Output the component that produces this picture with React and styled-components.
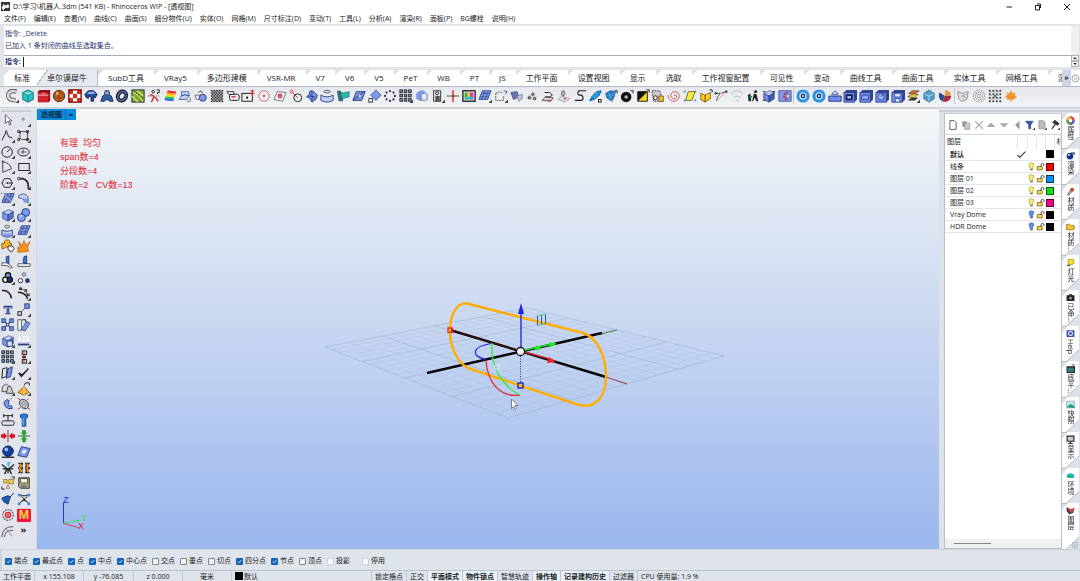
import React from "react";
import styled, { createGlobalStyle } from "styled-components";

const GlobalStyle = createGlobalStyle`
  * { box-sizing: border-box; }
  body {
    margin: 0;
    overflow: hidden;
    font-family: "Open Sans", "Noto Sans CJK SC", sans-serif;
    font-size: 7px;
    line-height: 12px;
    color: #1b1b1b;
  }
  button, input {
    font: inherit;
    color: inherit;
    margin: 0;
    padding: 0;
    border: none;
    background: none;
  }
`;

const Window = styled.div`
  display: flex;
  flex-direction: column;
  height: 100vh;
  background: #dfe3ea;
`;

const TitleBar = styled.header`
  display: flex;
  align-items: center;
  height: 13px;
  padding-left: 1px;
  gap: 3px;
  background: white;
`;

const Title = styled.h1`
  flex: 1;
  margin: 0;
  font-size: 7px;
  font-weight: 400;
`;

const WindowButton = styled.button`
  display: flex;
  align-items: center;
  justify-content: center;
  width: 26px;
  height: 12px;
`;

const MenuBar = styled.nav`
  display: flex;
  gap: 8px;
  height: 11px;
  padding-left: 4px;
  background: white;
`;

const MenuItem = styled.button`
  line-height: 11px;
  white-space: nowrap;
`;

const CommandArea = styled.section`
  display: flex;
  height: 46px;
  padding: 2px 1px 3px 4px;
  background: #e1e5ea;
`;

const CommandText = styled.div`
  flex: 1;
  display: flex;
  flex-direction: column;
  background: white;
  color: #26356f;
`;

const History = styled.div`
  flex: 1;
  padding: 2px 0 0 1px;
`;

const Prompt = styled.label`
  display: flex;
  align-items: center;
  gap: 2px;
  height: 12px;
  padding-left: 1px;
  border-top: 1px solid #a9adb3;
  font-weight: 700;
`;

const CommandInput = styled.input`
  flex: 1;
  height: 10px;
  border-left: 1px solid #222;
  outline: none;
`;

const CommandScroll = styled.div`
  display: flex;
  flex-direction: column;
  justify-content: flex-end;
  width: 8px;
  background: #f0f0f0;
`;

const SpinButton = styled.button`
  display: flex;
  height: 6px;
  align-items: center;
  justify-content: center;
  border: 1px solid #b4b4b4;
  background: #f4f4f4;
`;

const TabStrip = styled.div`
  display: flex;
  height: 17px;
  padding-left: 4px;
  overflow: hidden;
  border-bottom: 1px solid #b5bbc4;
  background: white;
  box-shadow: inset 4px 0 #e1e5ea;
`;

const Tabs = styled.div`
  display: flex;
  flex: 1;
  overflow: hidden;
`;

const Tab = styled.button`
  flex: none;
  padding: 0 10px;
  font-size: 8px;
  line-height: 16px;
  white-space: nowrap;
  background: ${(p) =>
    p.$active
      ? "linear-gradient(125deg, white 8px, #b5bbc4 8px, #b5bbc4 9px, #e6e9ee 9px)"
      : "linear-gradient(135deg, #dde1e6 4px, white 4px)"};
  border-right: ${(p) => (p.$active ? "1px solid #b5bbc4" : "none")};
  &:first-child {
    padding-right: 7px;
  }
`;

const MoreTabs = styled.button`
  width: 9px;
  background: #cfd5e6;
  font-weight: 700;
`;

const TabOptions = styled.button`
  display: flex;
  align-items: center;
  width: 9px;
`;

const Toolbar = styled.div`
  display: flex;
  align-items: center;
  justify-content: space-between;
  height: 21px;
  padding: 0 62px 3px 5px;
  background: linear-gradient(#e4e7ec, #f2f4f6);
  border-bottom: 1px solid #cdd2d9;
`;

const ToolButton = styled.button`
  display: block;
  flex: none;
  width: 14px;
  height: 14px;
`;

const Separator = styled.span`
  width: 1px;
  height: 16px;
  background: #c3c8d0;
`;

const Glyph = styled.svg`
  display: block;
  width: ${(p) => p.$size || 14}px;
  height: ${(p) => p.$size || 14}px;
  flex: none;
`;

const Main = styled.main`
  display: flex;
  flex: 1;
  min-height: 0;
`;

const SideTools = styled.aside`
  width: 37px;
  padding: 2px 5px 11px 1px;
  border-right: 1px solid #d3d8e0;
  background: #e1e4ea;
`;

const Grip = styled.div`
  height: 2px;
  margin-bottom: 1px;
  background: #c8cdd6;
`;

const ToolGrid = styled.div`
  display: grid;
  grid-template-columns: 14px 14px;
  justify-content: space-between;
  align-content: space-between;
  height: calc(100% - 3px);
`;

const Viewport = styled.section`
  position: relative;
  flex: 1;
  overflow: hidden;
  border-top: 1px solid #d3d8e0;
  background: linear-gradient(#f5f7f7, #c8d6f1 50%, #9ab7ee);
`;

const ViewName = styled.button`
  position: absolute;
  top: 0;
  left: 0;
  display: flex;
  align-items: center;
  gap: 2px;
  height: 11px;
  padding: 0 2px 0 4px;
  background: #0a8ad8;
  color: #08263d;
  font-weight: 700;
`;

const Divider = styled.span`
  width: 1px;
  height: 11px;
  margin-left: 1px;
  background: #0669a8;
`;

const Notes = styled.div`
  position: absolute;
  top: 27px;
  left: 23px;
  color: #e02530;
  font-family: "Liberation Sans", "Noto Sans CJK SC", sans-serif;
  font-size: 9px;
  line-height: 14px;
  white-space: pre;
`;

const Scene = styled.svg`
  display: block;
  width: 100%;
  height: 100%;
`;

const RightDock = styled.aside`
  display: flex;
  width: 141px;
  padding: 5px 1px 0 5px;
  background: linear-gradient(#dde1e9 2px, #c8cdd6 2px, #c8cdd6 4px, #dde1e9 4px);
`;

const LayerPanel = styled.div`
  flex: 1;
  display: flex;
  flex-direction: column;
  border: 1px solid #b9bec8;
  border-top-color: #c9ced6;
  background: white;
  min-width: 0;
`;

const LayerTools = styled.div`
  display: flex;
  justify-content: space-between;
  align-items: center;
  height: 20px;
  padding: 2px 1px 0 3px;
`;

const LayerButton = styled.button`
  width: 10px;
  height: 10px;
`;

const LayerTable = styled.table`
  width: 100%;
  table-layout: fixed;
  border-collapse: collapse;
  border-top: 1px solid #d5d5d5;
`;

const HeadCell = styled.th`
  width: ${(p) => p.$w}px;
  height: 14px;
  padding: 0 0 0 2px;
  overflow: hidden;
  border-right: 1px solid #e6e6e6;
  text-align: left;
  font-weight: 400;
  white-space: nowrap;
`;

const Cell = styled.td`
  height: 12px;
  padding: 0 0 0 ${(p) => (p.$name ? 5 : 0)}px;
  border-bottom: 1px solid #e6e6e6;
  line-height: 11px;
  font-weight: ${(p) => (p.$bold ? 700 : 400)};
  white-space: nowrap;
`;

const Swatch = styled.span`
  display: block;
  width: 8px;
  height: 8px;
  margin-left: 1px;
  border: 1px solid rgba(0, 0, 0, 0.6);
  background: ${(p) => p.$color};
`;

const ScrollTrack = styled.div`
  display: flex;
  align-items: center;
  height: 9px;
  margin-top: auto;
  padding-left: 9px;
  background: #f0f0f0;
`;

const ScrollThumb = styled.div`
  width: 37px;
  height: 1px;
  background: #858585;
`;

const PanelTabs = styled.div`
  position: relative;
  display: flex;
  flex-direction: column;
  width: 17px;
`;

const TabShadow = styled.div`
  flex: ${(p) => (p.$last ? "0 0 46px" : "1")};
  display: flex;
  filter: drop-shadow(0 1px 0 #b4bac5);
`;

const PanelTab = styled.button`
  flex: 1;
  display: flex;
  flex-direction: column;
  align-items: center;
  justify-content: flex-start;
  gap: 1px;
  padding-top: 3px;
  overflow: hidden;
  background: white;
  clip-path: polygon(6px 0, 100% 0, 100% calc(100% - 12px), 4px 100%, 0 100%, 0 7px);
`;

const PanelOptions = styled.button`
  position: absolute;
  right: 0;
  bottom: 0;
`;

const VerticalText = styled.span`
  writing-mode: vertical-rl;
  line-height: 9px;
  white-space: nowrap;
`;

const SnapBar = styled.footer`
  display: flex;
  align-items: center;
  gap: 5px;
  height: 21px;
  padding: 2px 0 0 3px;
  border-left: 2px solid #cfd4dc;
  border-top: 1px solid #cfd4dc;
`;

const SnapOption = styled.label`
  display: flex;
  align-items: center;
  gap: 2px;
  white-space: nowrap;
  margin-right: ${(p) => (p.$wide ? 7 : 0)}px;
`;

const tick =
  "url(\"data:image/svg+xml,%3Csvg xmlns='http://www.w3.org/2000/svg' viewBox='0 0 8 8'%3E%3Cpath d='M2 4l1.500 1.500L6 2.500' fill='none' stroke='%23e4effa'/%3E%3C/svg%3E\")";

const SnapBox = styled.input`
  appearance: none;
  display: block;
  width: 7px;
  height: 7px;
  border: 1px solid ${(p) => (p.$faint ? "#cdd0d6" : "#7d8188")};
  border-radius: 1px;
  background: #f6f7f9;
  &:checked {
    border: none;
    background: #1166bb ${tick};
  }
`;

const StatusBar = styled.footer`
  display: flex;
  height: 11px;
  border-top: 1px solid #bcc2cb;
`;

const StatusCell = styled.button`
  flex: none;
  display: flex;
  align-items: center;
  justify-content: ${(p) => (p.$left ? "flex-start" : "center")};
  gap: 1px;
  width: ${(p) => (p.$w ? p.$w + "px" : "auto")};
  padding: 0 3px;
  border-right: 1px solid ${(p) => (p.$plain ? "transparent" : "#c2c7d0")};
  background: ${(p) => (p.$on ? "#e9f1f8" : "none")};
  font-weight: ${(p) => (p.$on ? 700 : 400)};
  line-height: 11px;
  white-space: nowrap;
`;

const LayerColor = styled.span`
  width: 8px;
  height: 8px;
  background: black;
`;

// shared paint values for the tool glyphs
const K = "#222";
const B = "#7c98ea";
const L = "#c3d1fa";
const N = "#1f3579";
const R = "#d8202c";
const line = { fill: "none", stroke: K, strokeWidth: 1.1 };

const fly = <path d="M16 12v4h-4z" fill="#444" />;

const Icon = ({ size, children }) => (
  <Glyph viewBox="0 0 16 16" $size={size} aria-hidden="true">
    {children}
  </Glyph>
);

const dots = (xs, ys, s, color, stroke) =>
  xs.flatMap((x) =>
    ys.map((y) => (
      <rect key={x + "-" + y} x={x} y={y} width={s} height={s} fill={color} stroke={stroke} />
    ))
  );

const ring = (n, r, size, color) =>
  Array.from({ length: n }, (_, i) => {
    const a = (i * 2 * Math.PI) / n;
    return (
      <circle key={i} cx={8 + r * Math.cos(a)} cy={8 + r * Math.sin(a)} r={size} fill={color} />
    );
  });

const checks = (a, b, n) => {
  const s = 14 / n;
  return (
    <g>
      <rect x="1" y="1" width="14" height="14" fill={a} />
      {Array.from({ length: n * n }, (_, i) => {
        const x = i % n;
        const y = Math.floor(i / n);
        return (x + y) % 2 ? null : (
          <rect key={i} x={1 + x * s} y={1 + y * s} width={s} height={s} fill={b} />
        );
      })}
    </g>
  );
};

const cube = (top, left, right) => (
  <g stroke={N} strokeWidth=".7">
    <path d="M2 5 9 2l5 2-6 4z" fill={top} />
    <path d="M2 5l6 3v7l-6-3z" fill={left} />
    <path d="M8 8l6-4v7l-6 4z" fill={right} />
  </g>
);

const mesh = (
  <g stroke={N} strokeWidth=".8">
    <path d="M5 2h10l-4 10H1z" fill={B} />
    <path d="M8 2 4 12M12 2 8 12M4 5h10M2 9h10" fill="none" stroke="#31458c" />
  </g>
);

const gear = (
  <g>
    <circle cx="8" cy="8" r="6" fill="#45a5ee" stroke="#2f8fe0" strokeWidth="3" />
    <circle cx="8" cy="8" r="4" fill="#d4eaff" />
    <circle cx="8" cy="8" r="2" fill="none" stroke={N} strokeWidth="1.5" />
  </g>
);

const slab = (
  <g>
    <path d="M1 4l3-3h12v11l-3 3H1z" fill="#35468f" />
    <path d="M1 4h12v11H1z" fill="#738bf0" stroke={N} strokeWidth=".8" />
  </g>
);

const topTools = [
  ["Pipe", <><path d="M13 3C4 0 1 8 6 12l6 1" {...line} strokeWidth="5" stroke="#555" /><path d="M13 3C4 0 1 8 6 12l6 1" {...line} strokeWidth="3" stroke="#d7d7d7" />{fly}</>],
  ["Gem", <><path d="M2 4 8 1l6 3v8l-6 3-6-3z" fill="#28c4c4" stroke="#0c6c74" /><path d="M2 4l6 3 6-3" fill="#9ff0ea" stroke="#0c6c74" strokeWidth=".7" /><path d="M8 7v8" stroke="#0c8088" /></>],
  ["Case", <><path d="M1 3l2-2h12v12l-2 2H1z" fill="#8d0d18" /><path d="M1 4h12v11H1z" fill="#d3212d" /><path d="M1 7h12M6 5h3" stroke="#ffd0d0" /></>],
  ["Ball", <><circle cx="8" cy="8" r="6.5" fill="#b9611e" stroke="#542509" /><path d="M3 6q5-4 10 0M2 9q6 3 12 0M8 2v12" fill="none" stroke="#743611" strokeWidth=".8" /><circle cx="6" cy="5" r="1.6" fill="#f2b680" /></>],
  ["Checker", <>{checks("#fff", "#dc2715", 3)}<rect x="1" y="1" width="14" height="14" fill="none" stroke="#861105" strokeWidth="1.6" /></>],
  ["Extrude", <><path d="M1 6l4-4h6l4 4-2 4-2-1v5H8V9L5 8v3L2 9z" fill="#244e96" stroke="#122754" /><path d="M3 5l3-2h5l2 2-5 1z" fill="#8fb9ef" /></>],
  ["Arch", <><path d="M1 14 3 8q5-4 10 0l2 6h-4q-3-4-6 0z" fill="#335fa8" stroke="#14264f" /><path d="M5 6l1-4h4l1 4" {...line} fill="#8bb0e6" /></>],
  ["Torus", <><ellipse cx="8" cy="8" rx="4.5" ry="5.5" fill="none" stroke="#141b36" strokeWidth="4.5" transform="rotate(30 8 8)" /><ellipse cx="8" cy="8" rx="4.5" ry="5.5" fill="none" stroke="#6474aa" strokeWidth="1.6" transform="rotate(30 8 8)" /></>],
  ["Terrain", <><rect x="1" y="1" width="14" height="14" fill="#7ea83a" stroke={K} /><path d="M2 4q5 1 12 10M1 8l7 7M7 2l7 6" fill="none" stroke="#efe477" strokeWidth="1.3" /><path d="M3 2l11 9" stroke="#294a16" strokeDasharray="2 1" /></>],
  ["Pose", <><path d="M3 7q3-1 5 2l-3 6M9 9l4 5" fill="none" stroke={R} strokeWidth="1.5" /><circle cx="7" cy="3" r="1.5" {...line} /><path d="M11 1h3v3h-2v2" {...line} /><path d="M1 8h13" stroke="#777" strokeDasharray="2 1" /></>],
  ["Curvature", <g strokeWidth="2.3"><path d="M5 3 15 4" stroke="#e7263b" /><path d="M4 5.2l10 1" stroke="#ff9d0c" /><path d="M3 7.4l10 1" stroke="#e9e626" /><path d="M2.5 9.6l10 1" stroke="#20c646" /><path d="M2 11.8l10 1" stroke="#2361e6" /></g>],
  ["Drape", <><path d="M4 3h8l1 4-3 5H1l3-4z" fill={L} stroke="#51659f" /><path d="M4 8q4-3 9 0" fill="none" stroke={N} /><path d="M10 14h4v-4" {...line} stroke="#777" /></>],
  ["Ball on surface", <><circle cx="10" cy="10" r="4" fill={B} stroke={N} /><path d="M1 7h5v5H3z" fill="#eef" stroke="#445" strokeWidth=".8" /><path d="M5 4l3-2 2 3" {...line} stroke="#445" /></>],
  ["Zebra", checks("#c6c6c6", "#222", 9)],
  ["Frame", <><rect x="4" y="6" width="11" height="7" rx="2" {...line} /><path d="M1 3h8v3H3z" fill="#fff" stroke={K} /><path d="M6 9h5" stroke={R} strokeWidth="1.5" /></>],
  ["Frame point", <><rect x="1" y="5" width="12" height="9" {...line} /><path d="M13 1v7M11 2h4M11 5h4" stroke={R} strokeWidth="1.3" /><circle cx="7" cy="10" r="1.3" fill={K} /></>],
  ["Target", <><circle cx="8" cy="8" r="6" fill="none" stroke="#d85e67" /><circle cx="8" cy="8" r="1.2" fill={R} /></>],
  ["Tilted target", <><path d="M5 3l10 1-4 10-10-2z" {...line} stroke="#666" strokeWidth=".9" /><circle cx="8" cy="8" r="2.6" fill={R} /><circle cx="8" cy="8" r="1" fill="#fff" /></>],
  ["Circle tangent", <><circle cx="10" cy="10" r="4.5" {...line} /><path d="M3 3l7 7" stroke={R} /><circle cx="3" cy="3" r="1.7" fill="#fff" stroke={R} /></>],
  ["Cage", <><path d="M2 9l3-3 1-4 4 1 4 4-1 4-5 4-2-4z" fill={B} stroke={N} /><path d="M3 8l9 1M8 2v13M5 5l6 7" fill="none" stroke={N} strokeWidth=".8" /></>],
  ["Revolve", <><ellipse cx="8" cy="3" rx="3.5" ry="1.5" {...line} strokeWidth=".8" /><path d="M1 7q7 4 14 0v6q-7 4-14 0z" fill={L} stroke={N} /></>],
  ["Pipe joint", <><path d="M1 2h4l3 4v8H3z" fill="#3b6a75" /><path d="M5 5l10-2v6l-8 2z" fill="#2bb9ad" stroke="#106a68" strokeWidth=".7" /></>],
  ["Surface", <><path d="M5 3h10l-4 10H1z" fill={B} stroke={N} /><path d="M2 12 14 3" stroke={N} /><path d="M8 5l3 3-4 3z" fill="#fff" stroke={N} strokeWidth=".6" /></>],
  ["Rotate surface", <><path d="M9 1l6 6-6 6-6-6z" fill={B} stroke={N} strokeWidth=".7" /><rect x="1" y="11" width="4" height="4" fill="#fff" stroke={K} /></>],
  ["Polar array", <g>{ring(8, 5.6, 1.3, "#34384e")}</g>],
  ["Grid array", <>{dots([1, 6, 11], [1, 6, 11], 3, "#8493c5", K)}{fly}</>],
  ["Cylinder", <><path d="M2 5q5-5 9-2v8q-4 4-9 0z" fill={B} stroke="#8a92b3" /><path d="M7 6q4-3 7 0v6q-3 3-7 0z" fill="#e5eaff" stroke="#6371b4" /></>],
  ["Robot", <><path d="M3 2h8v12H3z" fill="#eee" stroke={K} /><path d="M5 14V8h5v6z" fill="#555" /><circle cx="7" cy="5" r="1.8" {...line} />{fly}</>],
  ["Gumball", <><path d="M8 1v14" stroke={R} strokeWidth="1.5" /><path d="M1 8h14" stroke="#3f9a49" strokeWidth="1.5" /><circle cx="8" cy="8" r="1.6" fill={R} /></>],
  ["Picture", <><rect x="1" y="2" width="14" height="12" fill="#ddd" stroke={K} strokeWidth="1.5" /><path d="M3 4h4v8H3z" fill="#2ab64c" /><path d="M6 4h4v8H6z" fill="#f4cf24" /><path d="M9 4h4v8H9z" fill="#d83ac4" /><path d="M4 9h8v3H4z" fill="#35c0d0" /></>],
  ["Mesh", <>{mesh}{fly}</>],
  ["Rebuild", <><path d="M2 5q5-3 8 0M2 5v8h9V8" {...line} stroke="#555" strokeDasharray="2 1" /><path d="M11 2l4 1-2 3" {...line} stroke="#4f4fb5" />{fly}</>],
  ["Cylinders", <><path d="M1 4l7-1 2 6-6 3z" fill="#6677b5" stroke="#333e70" strokeWidth=".8" /><path d="M8 8l6-2v5l-4 3z" fill="#bdc6de" stroke="#777" strokeWidth=".8" /></>],
  ["Points", <><path d="M1 11l4-5 10 2-4 5z" fill="#d3d3d3" /><circle cx="5" cy="10" r="1.3" {...line} /><circle cx="9" cy="6" r="1.3" {...line} /><circle cx="11" cy="11" r="1.3" {...line} /></>],
  ["Plane rotate", <><path d="M1 13l4-4 9 1-3 4z" fill="#d6d6d6" stroke="#555" /><path d="M4 4h6l3 3-3 2H5" {...line} /><path d="M7 13h5" stroke={R} /></>],
  ["Plane point", <><path d="M1 12l4-4 10 3-6 4z" fill="#d9d9d9" stroke="#aaa" /><path d="M7 1v8M5 3h4v4H5z" {...line} stroke="#777" /><circle cx="9" cy="11" r="1" fill={R} /></>],
  ["Step curve", <path d="M15 2H7Q4 5 7 7h3q3 4 0 6H2" {...line} strokeWidth="1.4" />],
  ["Paint", <><path d="M15 2 10 3 4 9l3 3 6-5z" fill="#239ce8" stroke="#0a548e" /><path d="M4 9l3 3-4 2-2-1z" fill="#0f6dbb" /><rect x="12" y="12" width="3" height="3" {...line} /></>],
  ["Patch", <><path d="M2 5l5-3 6 1-1 5-3 6-6-4z" fill="#1c79be" stroke="#0b4476" strokeWidth=".7" /><path d="M3 8l9-3M5 3l4 11M4 11l8-5" stroke="#7fc4f2" strokeWidth=".6" /><path d="M12 2h3v3" {...line} /></>],
  ["Dark ball", <><circle cx="7" cy="9" r="6" fill="#111" /><circle cx="7" cy="9" r="2" fill="#bbb" /><path d="M12 2h3v3" {...line} /></>],
  ["Contrast", <><path d="M2 3h11v11H2z" fill="#f5d423" stroke="#111" /><path d="M2 14V3h11z" fill="#111" /><path d="M12 1h3v3" {...line} /></>],
  ["Lock", <><path d="M1 2h9l4 12H3z" fill="#c9c9c9" stroke="#444" strokeDasharray="2 1" /><path d="M9 8h5v6H9z" fill="#efc640" stroke="#755400" /><circle cx="5" cy="10" r="2.2" fill="#eee" stroke={K} /></>],
  ["Spiral", <path d="M8 8q2-3 3 0 0 4-4 3-5-3-1-7 6-3 8 3 0 7-7 7-6-2-6-7" fill="none" stroke="#d65662" strokeWidth="1.1" />],
  ["Yellow plane", <><path d="M6 3h8l-4 10H3z" fill="#f6e84b" stroke="#76640a" />{dots([1, 13], [2, 12], 2, "#2d96d5")}</>],
  ["Yellow box", <><path d="M2 5l5 2 6-3v7l-6 4-5-3z" fill="#ffca22" stroke="#5c4300" strokeWidth=".8" /><path d="M7 7v8" stroke="#5c4300" /><path d="M12 1h3v3" {...line} /></>],
  ["Blend", <><path d="M1 5h6q-4 4-4 9M8 5l6-2" {...line} stroke="#555" /><path d="M4 13 13 4" stroke="#e8a5a5" /><circle cx="2" cy="5" r="1" {...line} /><circle cx="14" cy="3" r="1" {...line} /></>],
  ["Arcs", <path d="M1 6q7-8 14 0M4 10q4-4 8 0M6 14q2-2 4 0" fill="none" stroke="#bbb" strokeWidth="1.1" />],
  ["Figures", <><path d="M2 7l3-2 1 9H3zM9 5l3 1 2 8h-2l-2-4-2 4H7z" fill={K} /><circle cx="11" cy="3" r="1.7" fill={K} /><path d="M4 9h3" stroke="#2b9643" strokeWidth="2" /></>],
  ["Blue box", <>{cube(L, "#7488da", "#4158ae")}<path d="M1 3h3M12 3h3M1 13h3" stroke={K} /></>],
  ["Puzzle", <><rect x="1" y="2" width="14" height="12" fill="#8198e8" stroke={N} strokeWidth=".7" /><path d="M11 4a4 4 0 1 0 0 8" fill="none" stroke={R} strokeWidth="2.2" strokeDasharray="2 1" /><path d="M10 6h3v4h-3z" fill="#fff" stroke={N} strokeWidth=".6" /></>],
  null,
  ["Options", gear],
  ["More options", gear],
  ["Lift", <><path d="M1 8h14v6H1z" fill="#738bf0" stroke={N} /><path d="M4 6l4-4 4 4h-3v3H7V6z" fill="#c7d2fc" stroke={N} strokeWidth=".8" /></>],
  ["Slab frame", <>{slab}<rect x="4" y="7" width="6" height="5" fill="#a9b9ff" stroke="#131d4a" strokeWidth="2" /></>],
  ["Slab plane", <>{slab}<path d="M3 7h8v5H3z" fill="#8da2f7" stroke={N} strokeWidth=".8" /></>],
  ["Slab hole", <>{slab}<circle cx="7" cy="9" r="3.5" fill="#a9b9ff" stroke={N} strokeWidth=".8" /><path d="M7 9l4-5" stroke={N} /></>],
  ["Slab save", <>{slab}<path d="M4 5h7v4H4zM5 11h5v4H5z" fill="#dbe3ff" stroke={N} strokeWidth=".7" /></>],
  ["Layers", <><path d="M2 13l4-3h8l-4 3z" fill="#333" /><path d="M2 9l4-3h8l-4 4z" fill="#f3c62a" stroke={K} strokeWidth=".6" /><path d="M3 5l4-3h8l-4 3z" fill="#e66b24" stroke={K} strokeWidth=".6" />{fly}</>],
  ["Ice", <><path d="M2 5l6-4 6 4v6l-6 4-6-4z" fill="#519ccb" stroke="#245981" strokeWidth=".7" /><path d="M3 6l5 2 5-2M8 8v6" fill="none" stroke="#b9e5fa" /></>],
  ["Material ball", <><circle cx="8" cy="8" r="7" fill="#f2e8d7" /><path d="M8 8V1a7 7 0 0 1 7 7z" fill="#e2964d" /><path d="M8 8h7a7 7 0 0 1-10 6z" fill="#a5303c" /><path d="M8 8 5 14A7 7 0 0 1 2 4z" fill="#294c9d" /></>],
  null,
  ["Cup", <><path d="M2 3l5 2 7-2-2 9-6 2-3-3z" fill="#dadada" stroke="#909090" /><path d="M7 8l6-2v4z" fill="#fff" stroke="#999" /></>],
  ["Dot ball", <g>{ring(16, 6.5, 0.6, "#555")}{ring(11, 4.3, 0.6, "#555")}{ring(6, 2, 0.6, "#555")}</g>],
  ["Dot grid", <g>{ring(1, 0, 1.2, "#333")}{dots([1, 5, 9, 13], [1, 5, 9, 13], 2, "#333")}{dots([3, 7, 11], [3, 7, 11], 1, "#555")}</g>],
  ["Leaf", <path d="M8 1l2 4 3-1-1 3 3 1-3 3 1 1-4 0-1 4-1-4-4 0 1-1-3-3 3-1-1-3 3 1z" fill="#f1942e" />],
];

const sideTools = [
  ["Select", <path d="M5 2v10l3-3 2 5 1.5-1-2-4h3z" fill="#fff" stroke="#555" />],
  ["Point", <><circle cx="7" cy="7" r="1.3" fill="none" stroke="#777" />{fly}</>],
  ["Polyline", <><path d="M1 13 6 3l3 6 4 1" {...line} /><circle cx="6" cy="3" r="1" fill="#fff" stroke={K} />{fly}</>],
  ["Curve", <><path d="M2 3h9M4 3q-2 7 1 9h7M12 3v9" {...line} strokeWidth=".9" />{dots([1, 11], [2, 11], 2, "#fff", K)}{fly}</>],
  ["Circle", <><circle cx="7" cy="8" r="6" {...line} /><path d="M7 8l4-4" {...line} />{fly}</>],
  ["Ellipse", <><ellipse cx="7.5" cy="8" rx="6.5" ry="4.5" {...line} /><path d="M4 8h7M7 5v5" {...line} strokeWidth=".8" />{fly}</>],
  ["Arc", <><path d="M2 14V2q8 1 10 8L2 14" {...line} strokeWidth=".9" /><circle cx="2" cy="2" r="1" fill="#fff" stroke={K} />{fly}</>],
  ["Rectangle", <><rect x="2" y="4" width="12" height="8" {...line} />{fly}</>],
  ["Polygon", <><path d="M4 3h6l3 5-3 5H4L1 8z" {...line} /><circle cx="7" cy="8" r="1" fill={K} /><path d="M7 8h6" {...line} />{fly}</>],
  ["Fillet", <><path d="M1 3h5q7 1 7 9v3" {...line} strokeWidth="1.8" /><circle cx="2" cy="3" r="1.4" fill="#fff" stroke={K} />{fly}</>],
  ["Surface points", <>{mesh}<path d="M4 3l8 8" stroke="#dce4ff" />{dots([3, 13, 0, 10], [1], 1, K)}{fly}</>],
  ["Sweep", <><path d="M2 4q7-5 11 3v5l-5-1q1-4-6-4z" fill={L} stroke="#4b5684" /><path d="M8 8l5-1v5l-5-1z" fill={B} />{fly}</>],
  ["Box", <>{cube(L, B, "#5871c8")}{fly}</>],
  ["Spheres", <><circle cx="10" cy="5" r="4.5" fill={B} stroke={N} /><circle cx="5" cy="11" r="4.5" fill="#859ff0" stroke={N} /><circle cx="4" cy="9" r="1.3" fill="#e5ebff" />{fly}</>],
  ["Revolve", <><ellipse cx="7" cy="3" rx="3" ry="1.5" {...line} strokeWidth=".7" /><path d="M1 7q6 3 12 0v6q-6 4-12 0z" fill={L} stroke={N} /><path d="M3 10q4 2 8 0v3q-4 2-8 0z" fill={B} />{fly}</>],
  ["Mesh", <>{mesh}{fly}</>],
  ["Join", <><path d="M1 5h3q-1-4 3-4t3 4h2v5H8q0-2-2-1T3 11H1z" fill="#f9b322" stroke="#654100" strokeWidth=".8" /><path d="M8 8h5l2 3-3 4-4-3z" fill="#fff" stroke={K} /></>],
  ["Explode", <path d="M2 3l4 5 2-6 2 5 5-4-3 6 1 5-9 1H1V9l3 2z" fill="#ff9515" stroke="#b14a00" strokeWidth=".7" />],
  ["Trim", <><path d="M1 9h6l6 5-2 1-4-3H1z" fill="#fff" stroke={K} strokeWidth=".8" /><path d="M9 1v9L6 8V2z" fill="#3f73d5" stroke={N} /></>],
  ["Split", <><path d="M1 10h14v3H1z" fill="#fff" stroke={K} strokeWidth=".8" /><path d="M11 1v9L7 9l1-7z" fill="#3f73d5" stroke={N} /></>],
  ["Group", <><circle cx="8" cy="5" r="3" fill={B} stroke="#111" strokeWidth="1.5" /><circle cx="5" cy="10" r="3" fill="#fff" stroke="#111" strokeWidth="1.5" /><circle cx="10" cy="10" r="3" fill={N} stroke="#111" strokeWidth="1.5" />{fly}</>],
  ["Ungroup", <><circle cx="8" cy="4" r="2.2" fill="#a7b7ef" stroke="#555" strokeWidth=".7" /><circle cx="4" cy="11" r="2.5" fill="#fff" stroke={K} /><circle cx="12" cy="11" r="2.7" fill={N} /></>],
  ["Edit curve", <path d="M1 4q9-1 11 9" {...line} strokeWidth="1.7" />],
  ["Edit points", <><path d="M1 6q9 0 11 8" {...line} strokeWidth="1.5" /><path d="M4 2l6 2 2 9" {...line} strokeWidth=".7" />{dots([3], [1], 2, "#fff", K)}{dots([9], [3], 2, "#fff", K)}{dots([12], [8], 2, "#fff", K)}{fly}</>],
  ["Text", <text x="3" y="13" fontFamily="Liberation Serif" fontWeight="700" fontSize="14" fill="#547be0" stroke={N} strokeWidth=".8">T</text>],
  ["Move", <><rect x="9" y="1" width="5" height="5" fill={B} stroke={N} /><rect x="1" y="10" width="4" height="4" {...line} /><path d="M5 10l4-4" {...line} strokeDasharray="2 1" />{fly}</>],
  ["Scatter", <><path d="M3 3l9 9M12 3 3 12" {...line} />{dots([1, 10], [1, 10], 4, B, N)}{dots([6], [6], 3, "#dbe3ff", N)}</>],
  ["Orient", <><path d="M1 2h4v12H1z" fill="#fff" stroke={K} strokeWidth=".8" /><path d="M11 4l4 2-6 9-4-2z" fill={B} stroke={N} strokeWidth=".8" /><path d="M6 2h4v3" {...line} /></>],
  ["Union", <>{cube(L, B, "#5871c8")}<path d="M7 8h6v6H7z" fill="#dbe3ff" stroke={N} />{fly}</>],
  ["Project", <><path d="M1 12h13" stroke={N} strokeWidth="2" /><path d="M3 2v8M8 2v8M12 2v8" stroke="#fff" strokeWidth="1.8" /><path d="M3 9v3M8 9v3M12 9v3" stroke={B} />{fly}</>],
  ["Array", <>{dots([1, 6, 11], [1, 6, 11], 3, B, K)}{fly}</>],
  ["Align", <><path d="M8 1v14" stroke={R} /><rect x="6" y="1" width="5" height="4" {...line} /><rect x="6" y="7" width="4" height="2" fill={R} stroke={K} strokeWidth=".6" /><rect x="6" y="11" width="5" height="4" {...line} />{fly}</>],
  ["Copy plane", <><path d="M2 3l5-1-1 10-5 2z" {...line} /><path d="M8 3l5-2-2 11-5 2z" fill={B} stroke={N} />{fly}</>],
  ["Check", <><path d="M2 8l3 4 8-9-7 7z" fill={K} stroke={K} strokeWidth="1.5" />{fly}</>],
  ["Solids", <><path d="M1 11l1-6 4-3 4 4v5z" fill="#ddd" stroke="#444" /><path d="M6 13l2-8h3l3 8z" fill="#ccc" stroke="#444" />{fly}</>],
  ["Pyramid", <><path d="M1 12l7-7 6 7-6 3z" fill="#f2ad32" stroke="#704800" strokeWidth=".8" /><path d="M8 5v10" stroke="#ffe4a1" /><path d="M8 4l2-3h4v3" {...line} />{fly}</>],
  ["Bend", <><path d="M8 3Q1 4 5 11q4 4 8 2l-1-3q-5 1-3-3z" fill={B} stroke={N} /><path d="M9 5l3-4" stroke={R} strokeDasharray="2 1" /></>],
  ["Light cage", <><ellipse cx="8" cy="8" rx="4.5" ry="6" fill="#d9cc86" stroke={N} transform="rotate(-45 8 8)" /><path d="M4 6l6 6M6 4l6 6" stroke={B} strokeWidth="1.4" /><path d="M1 1l3 3M13 2l-2 2M12 12l3 3M1 14l3-2" stroke={R} /></>],
  ["Width", <><rect x="1" y="9" width="14" height="5" rx="2" {...line} /><path d="M3 3h10M3 1v4M13 1v4M8 3v6" {...line} /></>],
  ["Bolt", <><path d="M4 2q4-2 8 0v3l-2 1v9H6V6L4 5z" fill="#297de1" stroke="#0c3e84" /><path d="M7 6v8" stroke="#91c2ff" /></>],
  ["Pull together", <><path d="M0 6h3V4l4 4-4 4v-2H0zM16 6h-3V4L9 8l4 4v-2h3z" fill="#db1320" /><path d="M8 1v14" stroke="#850e14" /></>],
  ["Push apart", <><path d="M6 1h4v3h2L8 8 4 4h2zM6 15h4v-3h2L8 8l-4 4h2z" fill="#27a334" /><path d="M1 8h14" stroke="#155d1c" /></>],
  ["Sphere", <><circle cx="8" cy="7" r="6" fill="#123f9f" stroke="#051744" /><circle cx="6" cy="5" r="2.2" fill="#9ec0ff" /><path d="M1 14h14" stroke={K} strokeWidth="1.5" /></>],
  ["Unroll", <><path d="M5 2l10 2-4 10-10-2z" fill={B} stroke={N} /><path d="M7 5l4 1-2 4-4-1z" fill="#e3eaff" /></>],
  ["Cut", <><path d="M1 4l6 5-3 6M15 4 9 9l3 6M8 8v6M2 9h12" {...line} strokeWidth="1.5" /><path d="M7 1h4L8 9z" fill="#35bfe8" /></>],
  ["Stripes", <><path d="M1 2h6l-1 3 1 3-1 3 1 3H1l2-3-2-3 2-3zM9 2h6l-2 3 2 3-2 3 2 3H9l1-3-1-3 1-3z" fill={K} /><path d="M3 3l2 3-2 2 2 3-1 2M11 3l2 3-2 2 2 3-1 2" fill="none" stroke="#f89b1c" strokeWidth="2" /></>],
  ["Shapes", <><path d="M3 4h4v4H3zM9 4h5v5H9z" fill="#f6cf3d" stroke="#785900" strokeWidth=".7" /><path d="M6 14l2-4 2 4z" fill="#fff" stroke="#94702a" /><path d="M1 12v3h3M12 1h3v3" {...line} /></>],
  ["Save", <><path d="M2 2h12v12H4l-2-2z" fill="#b5ae7b" stroke={K} /><path d="M4 3h8v5H4z" fill="#f4f1d6" stroke={K} strokeWidth=".7" /><path d="M5 10h6v4H5z" fill="#777" /></>],
  ["Surface edit", <><path d="M1 7q6-4 10-2l-3 9-5-3z" fill="#1c5faf" stroke={N} /><path d="M10 6l4-4" stroke={K} /><rect x="13" y="1" width="2" height="2" fill="#4199ec" /></>],
  ["Net", <><path d="M2 3q6 3 12 0M2 14q6-9 12 0M5 5l7 7M12 5 5 11" {...line} />{dots([1, 12], [2, 12], 3, "#3f86d9")}</>],
  ["Red gear", <><circle cx="8" cy="8" r="6" fill="#eee" stroke="#666" strokeWidth="1.5" strokeDasharray="2 1" /><circle cx="8" cy="8" r="3" fill="none" stroke={R} strokeWidth="1.5" /><path d="M5 8h6M8 5v6" stroke={R} /></>],
  ["M tools", <><rect x="0" y="1" width="16" height="15" fill="#ee1747" /><text x="2" y="13" fontFamily="Liberation Sans" fontWeight="700" fontSize="14" fill="#ffd43a">M</text></>],
  ["Offset", <><path d="M1 15Q1 3 14 3M4 15q0-8 10-8" {...line} stroke="#555" /><path d="M6 6l7 8" {...line} stroke="#888" /></>],
  ["More tools", <text x="4" y="10" fontFamily="Open Sans" fontWeight="700" fontSize="11" fill={K}>»</text>],
];

const menus = ["文件(F)", "编辑(E)", "查看(V)", "曲线(C)", "曲面(S)", "细分物件(U)", "实体(O)", "网格(M)", "尺寸标注(D)", "变动(T)", "工具(L)", "分析(A)", "渲染(R)", "面板(P)", "BG螺栓", "说明(H)"];

const tabs = ["标准", "卓尔谟犀牛", "SubD工具", "VRay5", "多边形建模", "VSR-MR", "V7", "V6", "V5", "PeT", "WB", "PT", "JS", "工作平面", "设置视图", "显示", "选取", "工作视窗配置", "可见性", "变动", "曲线工具", "曲面工具", "实体工具", "网格工具", "渲染"];

const layers = [
  { name: "默认", color: "#000", current: true },
  { name: "线条", color: "#f00", on: true },
  { name: "图层 01", color: "#0a90f5", on: true },
  { name: "图层 02", color: "#14dd14", on: true },
  { name: "图层 03", color: "#f5008c", on: true },
  { name: "Vray Dome", color: "#000" },
  { name: "HDR Dome", color: "#000" },
];

const layerTools = [
  ["New layer", <path d="M3 1h7l3 3v11H3z" {...line} />],
  ["New sublayer", <><path d="M2 2h7v9H2z" fill="#999" /><path d="M6 5h8v10H6z" fill="#ccc" stroke="#888" /></>],
  ["Delete", <path d="M2 2l12 12M14 2 2 14" stroke="#aaa" strokeWidth="1.8" />],
  ["Up", <path d="M1 11l7-7 7 7z" fill="#aaa" />],
  ["Down", <path d="M1 5l7 7 7-7z" fill="#aaa" />],
  ["Back", <path d="M12 1v14L5 8z" fill="#999" />],
  ["Filter", <><path d="M1 2h12L9 8v6H6V8z" fill="#3659bd" stroke={N} />{fly}</>],
  ["Columns", <><path d="M3 1h7l3 3v10H3z" fill="#bbb" stroke="#888" />{fly}</>],
  ["Tools", <><path d="M3 14 9 6M5 4l3-3 6 5-2 2-3-2z" fill="#333" stroke="#333" strokeWidth="2" />{fly}</>],
];

const panels = [
  ["属性", <><circle cx="8" cy="8" r="5.5" fill="none" stroke="#e13a3a" strokeWidth="4" /><path d="M2.5 8A5.5 5.5 0 0 1 8 2.5" fill="none" stroke="#e9c62c" strokeWidth="4" /><path d="M8 13.5A5.5 5.5 0 0 1 2.5 8" fill="none" stroke="#2db14a" strokeWidth="4" /><path d="M13.5 8A5.5 5.5 0 0 1 8 13.5" fill="none" stroke="#3c65da" strokeWidth="4" /></>],
  ["渲染", <><circle cx="7" cy="9" r="6" fill="#15328b" /><circle cx="5" cy="7" r="2" fill="#c8d7ff" /><path d="M9 3h6v4" fill="#4b78d1" stroke={K} /></>],
  ["材质", <><path d="M2 14 8 5l3 2-6 8z" fill="#a8a8a8" stroke="#555" /><circle cx="11" cy="5" r="3.5" fill="#d34634" /></>],
  ["材质…", <path d="M1 4h5l2 2h6v3h2l-3 5H1z" fill="#f4c43b" stroke="#755300" />],
  ["灯光", <><path d="M14 3 4 2Q1 9 7 13l7-3z" fill="#f7dc31" stroke="#887300" /><path d="M2 13h5" stroke="#666" strokeWidth="3" /></>],
  ["已命…", <><path d="M1 4h14v10H1z" fill="#222" /><circle cx="8" cy="9" r="3" fill="#888" /><path d="M5 2h6v3H5z" fill="#222" /></>],
  ["Help", <><path d="M1 2h14v12H1z" fill="#3752c1" /><circle cx="8" cy="8" r="3.5" fill="none" stroke="#fff" strokeWidth="1.8" /></>],
  ["底平…", <><path d="M2 5h13v10H2z" fill="#347f7e" stroke={K} strokeWidth="2" /><path d="M10 1h4v4" {...line} /></>],
  ["快照", <><path d="M1 2h14v12H1z" fill="#bbe8ed" stroke="#888" /><path d="M1 13l7-6 7 4v3z" fill="#1c9c87" /></>],
  ["显示", <><path d="M2 2h12v9H2z" fill="#ccc" stroke="#222" strokeWidth="2" /><path d="M8 11v4M4 15h8" stroke="#222" strokeWidth="2" /></>],
  ["环境", <><path d="M1 11a7 7 0 0 1 14 0z" fill="#20b5d0" /><path d="M1 12l6-4 8 4z" fill="#26a44c" /></>],
  ["图层", <><path d="M1 2l8 4 6-3-2 9-7 3-5-6z" fill="#333b67" /><path d="M2 2l7 4 6-3-2 6-5 3z" fill="#e9442d" /></>],
];

const snaps = [["端点", 1], ["最近点", 1], ["点", 1], ["中点", 1], ["中心点", 1], ["交点", 0], ["垂点", 0], ["切点", 0], ["四分点", 1], ["节点", 1], ["顶点", 0], ["投影", 0], ["停用", 0]];

// maps a unit square onto the four projected corners of the construction plane
const quad = [[325, 347], [527, 308], [724, 356], [508, 418]];

const project = (u, v) => {
  const [[x0, y0], [x1, y1], [x2, y2], [x3, y3]] = quad;
  const sx = x0 - x1 + x2 - x3;
  const sy = y0 - y1 + y2 - y3;
  const det = (x1 - x2) * (y3 - y2) - (x3 - x2) * (y1 - y2);
  const g = (sx * (y3 - y2) - (x3 - x2) * sy) / det;
  const h = ((x1 - x2) * sy - sx * (y1 - y2)) / det;
  const w = g * u + h * v + 1;
  return [
    ((x1 - x0 + g * x1) * u + (x3 - x0 + h * x3) * v + x0) / w,
    ((y1 - y0 + g * y1) * u + (y3 - y0 + h * y3) * v + y0) / w,
  ];
};

const gridPath = (major) => {
  let d = "";
  for (let i = 0; i <= 20; i++) {
    if ((i % 5 === 0) !== major) continue;
    const t = i / 20;
    d += `M${project(t, 0)}L${project(t, 1)}M${project(0, t)}L${project(1, t)}`;
  }
  return d;
};

const Tool = ({ tool }) =>
  tool ? (
    <ToolButton aria-label={tool[0]}>
      <Icon>{tool[1]}</Icon>
    </ToolButton>
  ) : (
    <Separator />
  );

const Drawing = () => (
  <Scene viewBox="37 109 902 440" preserveAspectRatio="xMidYMid meet">
    <g fill="none">
      <path d={gridPath(false)} stroke="#8eb0c8" strokeOpacity=".26" strokeWidth=".6" />
      <path d={gridPath(true)} stroke="#7fa3b4" strokeOpacity=".5" strokeWidth=".7" />
      <path d="M601 334l16-4" stroke="#3a8746" />
      <path d="M606 377l21 7" stroke="#a03b4c" />
      <path d="M427 373 602 333M450 330 606 377" stroke="#050505" strokeWidth="2.4" />
      <path d="M450 330l71 21" stroke="#7a1818" strokeWidth=".6" />
      <path
        d="M467 303.5 583 333C597 337 606 356 606 377C606 396 596 409 579 405L469 368.5C458 364 450 347 450 331C450 314 457 302 467 303.5Z"
        stroke="#ffae00"
        strokeWidth="2.4"
      />
      <path d="M521 351V311" stroke="#2929e6" strokeWidth="1.4" />
      <path d="M521 303l3 11h-6z" fill="#2323e6" />
      <path d="M520.5 356v27" stroke="#2b2bca" strokeDasharray="1 1.5" />
      <path d="M521 351l31-7" stroke="#28e534" strokeWidth="1.3" />
      <circle cx="537.5" cy="348" r="2.5" fill="#1fee22" />
      <path d="M549 342l8 1.5-7 4z" fill="#1fee22" />
      <path d="M521 351l32 9" stroke="#cc2525" strokeWidth="1.3" />
      <path d="M549 357l7 5-9 1z" fill="#ee2222" />
      <path d="M491 343.5C471 347 471 356 486 359.5" stroke="#2525e8" strokeWidth="1.2" />
      <path d="M486 360C487 382 500 398 520 395" stroke="#e82833" strokeWidth="1.3" />
      <path d="M492 343C490 366 502 386 520 395" stroke="#2bed43" strokeWidth="1.3" />
      <circle cx="497" cy="367" r="2.5" stroke="#dceff2" />
      <path d="M500 364l16-9" stroke="#e8eefb" strokeDasharray="1 2" />
      <rect x="518" y="383" width="5" height="5" stroke="#1919a8" strokeWidth="1.3" />
      <rect x="448" y="328" width="4.5" height="4.5" stroke="#ef2020" strokeWidth="1.3" />
      <circle cx="520.5" cy="351.5" r="4" fill="white" stroke="#111" strokeWidth="1.3" />
      <path d="M537.5 315.5v10M541.5 315v10M545.5 314v10" stroke="#3059b8" />
      <path d="M537 315.5l9-1.5M537 325.5l9-1.5" stroke="#4bc66f" strokeWidth=".8" />
      <path d="M511.5 399v9.5l2-2 1.5 3 1.5-1-1.5-3h3z" fill="white" stroke="#555" strokeWidth=".7" />
      <path d="M63.5 523v-20" stroke="#3030cf" />
      <path d="M63.5 523l17-3" stroke="#35df58" />
      <path d="M63.5 523.5l15 4" stroke="#cc4250" />
    </g>
    <g fontFamily="Liberation Sans" fontSize="9">
      <text x="63" y="503" fill="#2828cd">Z</text>
      <text x="81" y="521" fill="#2edc4b">Y</text>
      <text x="78" y="529" fill="#d42430">X</text>
    </g>
  </Scene>
);

const LayerRow = ({ layer }) => (
  <tr>
    <Cell $name $bold={layer.current}>{layer.name}</Cell>
    <Cell>{layer.current && <Icon size={9}><path d="M1 9l4 4L15 3" {...line} strokeWidth="1.8" /></Icon>}</Cell>
    <Cell>
      {!layer.current && (
        <Icon size={9}>
          <path d="M5 9Q2 5 5 2q4-2 7 1 1 3-2 6v4H6z" fill={layer.on ? "#ffef70" : "#5c91e5"} stroke={layer.on ? "#907b1d" : "#315798"} />
          <path d="M6 12h4v3H6z" fill="#777" />
        </Icon>
      )}
    </Cell>
    <Cell>
      {!layer.current && (
        <Icon size={9}>
          <path d="M2 8h9v6H2z" fill="#f3d750" stroke="#715b0b" strokeWidth="1.3" />
          <path d="M9 8V4q3-4 5 0v3" {...line} strokeWidth="1.5" />
        </Icon>
      )}
    </Cell>
    <Cell><Swatch $color={layer.color} /></Cell>
    <Cell />
  </tr>
);

const App = () => {
  return (
    <Window>
      <GlobalStyle />
      <TitleBar>
        <Icon size={9}>
          <rect width="16" height="16" fill="#333" />
          <path d="M1 10l4-7 2 3 6-2 2 5-3 2-4-1-4 5z" fill="#f4f4f4" />
        </Icon>
        <Title>D:\学习\机器人.3dm (541 KB) - Rhinoceros WIP - [透视图]</Title>
        <WindowButton aria-label="Minimize"><Icon size={8}><path d="M3 8h11" {...line} strokeWidth="2" /></Icon></WindowButton>
        <WindowButton aria-label="Restore"><Icon size={8}><path d="M3 5h8v9H3zM6 2h7v8" {...line} strokeWidth="2" /></Icon></WindowButton>
        <WindowButton aria-label="Close"><Icon size={8}><path d="M2 2l12 12M14 2 2 14" {...line} strokeWidth="2" /></Icon></WindowButton>
      </TitleBar>
      <MenuBar>
        {menus.map((m) => <MenuItem key={m}>{m}</MenuItem>)}
      </MenuBar>
      <CommandArea>
        <CommandText>
          <History>
            <div>指令: _Delete</div>
            <div>已加入 1 条封闭的曲线至选取集合。</div>
          </History>
          <Prompt>
            指令:
            <CommandInput />
          </Prompt>
        </CommandText>
        <CommandScroll>
          <SpinButton aria-label="Scroll up"><Icon size={4}><path d="M1 12 8 4l7 8z" fill={K} /></Icon></SpinButton>
          <SpinButton aria-label="Scroll down"><Icon size={4}><path d="M1 4l7 8 7-8z" fill={K} /></Icon></SpinButton>
        </CommandScroll>
      </CommandArea>
      <TabStrip>
        <Tabs>
          {tabs.map((t, i) => <Tab key={t} $active={i === 1}>{t}</Tab>)}
        </Tabs>
        <MoreTabs>»</MoreTabs>
        <TabOptions aria-label="Tab options">
          <Icon size={9}><circle cx="8" cy="8" r="6" fill="none" stroke="#999" strokeWidth="2" strokeDasharray="3 1" /><circle cx="8" cy="8" r="2" {...line} stroke="#999" /></Icon>
        </TabOptions>
      </TabStrip>
      <Toolbar>
        {topTools.map((t, i) => <Tool key={i} tool={t} />)}
      </Toolbar>
      <Main>
        <SideTools>
          <Grip />
          <ToolGrid>
            {sideTools.map((t) => <Tool key={t[0]} tool={t} />)}
          </ToolGrid>
        </SideTools>
        <Viewport>
          <Drawing />
          <ViewName>
            透视图
            <Divider />
            <Icon size={6}><path d="M2 5h12l-6 7z" fill="#08263d" /></Icon>
          </ViewName>
          <Notes>{"有理  均匀\nspan数=4\n分段数=4\n阶数=2   CV数=13"}</Notes>
        </Viewport>
        <RightDock>
          <LayerPanel>
            <LayerTools>
              {layerTools.map(([name, art]) => (
                <LayerButton key={name} aria-label={name}><Icon size={10}>{art}</Icon></LayerButton>
              ))}
            </LayerTools>
            <LayerTable>
              <thead>
                <tr>
                  <HeadCell $w={72}>图层</HeadCell>
                  <HeadCell $w={10} />
                  <HeadCell $w={9} />
                  <HeadCell $w={9} />
                  <HeadCell $w={9} />
                  <HeadCell>材质</HeadCell>
                </tr>
              </thead>
              <tbody>
                {layers.map((l) => <LayerRow key={l.name} layer={l} />)}
              </tbody>
            </LayerTable>
            <ScrollTrack><ScrollThumb /></ScrollTrack>
          </LayerPanel>
          <PanelTabs>
            {panels.map(([name, art], i) => (
              <TabShadow key={name} $last={i === panels.length - 1}>
                <PanelTab>
                  <Icon size={9}>{art}</Icon>
                  <VerticalText>{name}</VerticalText>
                </PanelTab>
              </TabShadow>
            ))}
            <PanelOptions aria-label="Panel options">
              <Icon size={8}><circle cx="8" cy="8" r="6" fill="none" stroke="#a9b0c4" strokeWidth="2" /><circle cx="8" cy="8" r="2" fill="#a9b0c4" /></Icon>
            </PanelOptions>
          </PanelTabs>
        </RightDock>
      </Main>
      <SnapBar>
        {snaps.map(([name, on], i) => (
          <SnapOption key={name} $wide={name === "投影"}>
            <SnapBox type="checkbox" defaultChecked={!!on} $faint={i > 10} />
            {name}
          </SnapOption>
        ))}
      </SnapBar>
      <StatusBar>
        <StatusCell $w={35}>工作平面</StatusCell>
        <StatusCell $w={49}>x 155.108</StatusCell>
        <StatusCell $w={50}>y -76.085</StatusCell>
        <StatusCell $w={49}>z 0.000</StatusCell>
        <StatusCell $w={49}>毫米</StatusCell>
        <StatusCell $w={140} $left><LayerColor />默认</StatusCell>
        <StatusCell>锁定格点</StatusCell>
        <StatusCell>正交</StatusCell>
        <StatusCell $on>平面模式</StatusCell>
        <StatusCell $on>物件锁点</StatusCell>
        <StatusCell>智慧轨迹</StatusCell>
        <StatusCell $on>操作轴</StatusCell>
        <StatusCell $on>记录建构历史</StatusCell>
        <StatusCell>过滤器</StatusCell>
        <StatusCell $plain>CPU 使用量: 1.9 %</StatusCell>
      </StatusBar>
    </Window>
  );
};

export default App;
